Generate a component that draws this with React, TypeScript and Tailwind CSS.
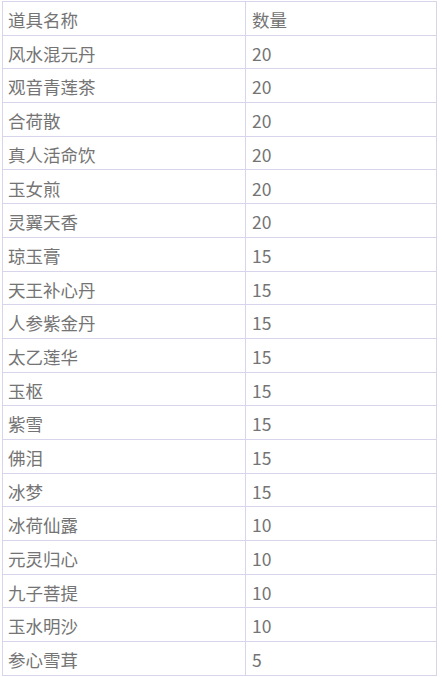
import React from 'react';

const rows: [string, number][] = [
  ['风水混元丹', 20],
  ['观音青莲茶', 20],
  ['合荷散', 20],
  ['真人活命饮', 20],
  ['玉女煎', 20],
  ['灵翼天香', 20],
  ['琼玉膏', 15],
  ['天王补心丹', 15],
  ['人参紫金丹', 15],
  ['太乙莲华', 15],
  ['玉枢', 15],
  ['紫雪', 15],
  ['佛泪', 15],
  ['冰梦', 15],
  ['冰荷仙露', 10],
  ['元灵归心', 10],
  ['九子菩提', 10],
  ['玉水明沙', 10],
  ['参心雪茸', 5],
];

export default function App() {
  return (
    <div className="w-[442px] h-[677px] bg-white pt-px pl-[2px]">
      <table
        className="w-[435px] border-collapse text-[17.5px] text-[#747474] leading-none"
        style={{ fontFamily: '"Noto Sans CJK SC", "Noto Sans", sans-serif' }}
      >
        <tbody>
          <tr className="h-[33.7px]">
            <td className="border border-[#d8d4ec] pl-[5px] pt-[3px] w-[243px]">道具名称</td>
            <td className="border border-[#d8d4ec] pl-[6px] pt-[3px]">数量</td>
          </tr>
          {rows.map(([name, qty]) => (
            <tr key={name} className="h-[33.7px]">
              <td className="border border-[#d8d4ec] pl-[5px] pt-[3px]">{name}</td>
              <td className="border border-[#d8d4ec] pl-[6px] pt-[3px]">{qty}</td>
            </tr>
          ))}
        </tbody>
      </table>
    </div>
  );
}
